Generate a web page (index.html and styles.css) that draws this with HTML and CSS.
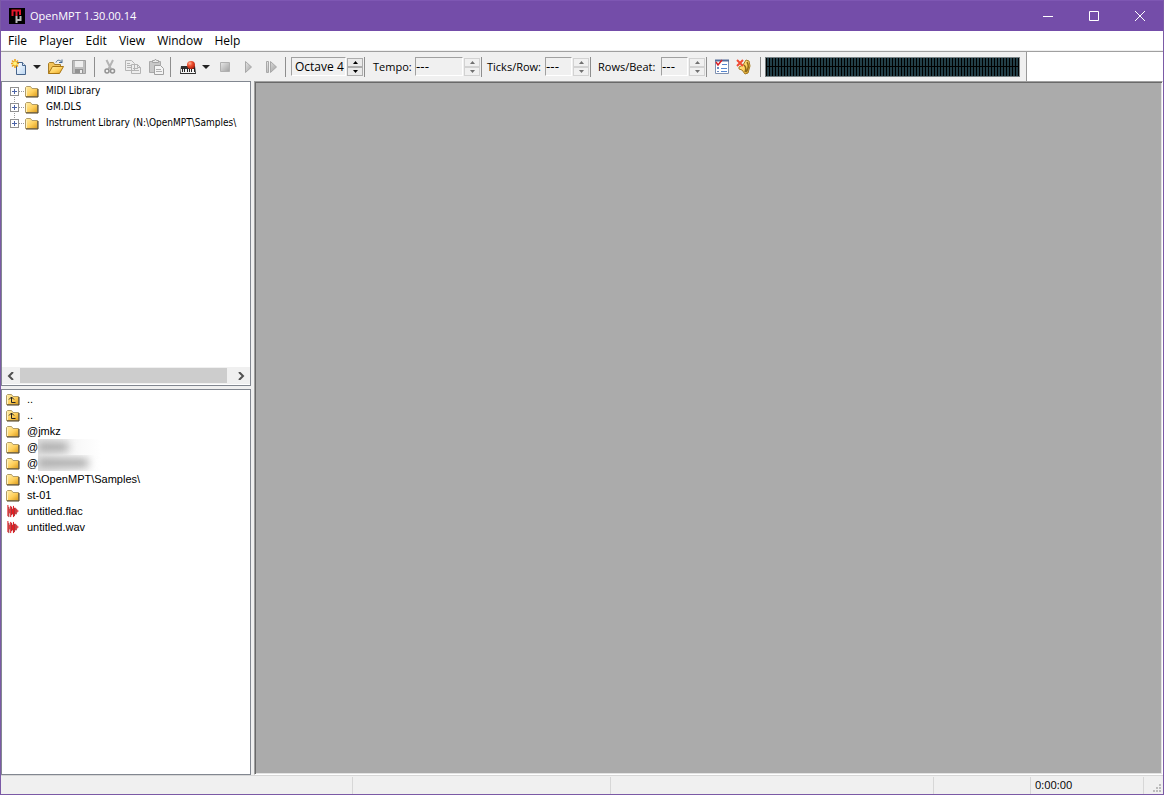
FILE: index.html
```html
<!DOCTYPE html>
<html lang="en">
<head>
<meta charset="utf-8">
<meta name="viewport" content="width=device-width, initial-scale=1">
<title>OpenMPT 1.30.00.14</title>
<link rel="stylesheet" href="styles.css">
</head>
<body>
<svg class="defs" aria-hidden="true">
  <defs>
    <linearGradient id="gold" x1="0" y1="0" x2="1" y2="1"><stop offset="0" stop-color="#fff0ae"/><stop offset=".55" stop-color="#ffd05c"/><stop offset="1" stop-color="#d99a1c"/></linearGradient>
    <linearGradient id="silver" x1="0" y1="0" x2="1" y2="1"><stop offset="0" stop-color="#e8e8e8"/><stop offset="1" stop-color="#a0a0a0"/></linearGradient>
    <linearGradient id="paper" x1="0" y1="0" x2="1" y2="1"><stop offset="0" stop-color="#fff"/><stop offset="1" stop-color="#b9d5f2"/></linearGradient>
    <radialGradient id="ball" cx=".35" cy=".3" r=".8"><stop offset="0" stop-color="#ffb49a"/><stop offset=".4" stop-color="#ee5030"/><stop offset="1" stop-color="#a81808"/></radialGradient>
    <symbol id="folder" viewBox="0 0 14 13"><path d="M.5 11.500v-9l1-1h4l1.500 2h5.500v8z" fill="url(#gold)" stroke="#b19c68"/><path d="M1 12h12V4" fill="none" stroke="#4a3a1a"/><path d="M1.500 11V3.500" fill="none" stroke="#fff2bd"/></symbol>
    <symbol id="wave" viewBox="0 0 14 14"><path d="M1.500 0v12M4.500 1v12M7.500 1v12M9.500 3v7" stroke="#e3060c"/><path d="M2.500 2v11M5.500 2v9M8.500 3v9M10.500 4v6" stroke="#9c1216"/><path d="M3.500 4v5M6.500 4v6M11.500 5v3M12.500 6v1" stroke="#e3060c"/></symbol>
  </defs>
</svg>
<div class="window">
  <header class="titlebar">
    <svg class="logo" viewBox="0 0 16 16"><path fill="#000" d="M0 0h16v16H0z"/><path d="M3.500 8V2.500h7.500V7M7.500 3v5" fill="none" stroke="#e0182c" stroke-width="2"/><path d="M7.500 15V8M7.500 12h4V8" fill="none" stroke="#b9b9bd" stroke-width="2"/></svg>
    <h1 class="title">OpenMPT 1.30.00.14</h1>
    <button class="caption" aria-label="Minimize"><svg viewBox="0 0 12 12"><path d="M1 6.500h10"/></svg></button>
    <button class="caption" aria-label="Maximize"><svg viewBox="0 0 12 12"><path d="M1.500 1.500h9v9h-9z"/></svg></button>
    <button class="caption" aria-label="Close"><svg viewBox="0 0 12 12"><path d="m1 1 10 10M11 1 1 11"/></svg></button>
  </header>
  <nav class="menubar">
    <button>File</button><button>Player</button><button>Edit</button><button>View</button><button>Window</button><button>Help</button>
  </nav>
  <div class="toolbar">
    <div class="group group-file">
      <button class="tool" aria-label="New"><svg viewBox="0 0 16 16"><path d="M5.500 3.500h6l3 3v9h-9z" fill="url(#paper)" stroke="#47658c"/><path d="M11.500 3.500v3h3" fill="#dbe9f8" stroke="#47658c"/><path d="M4 0v9M0 4.500h8M1 1.500l6 6M7 1.500l-6 6" stroke="#eda51d" stroke-width="1.600"/><circle cx="4" cy="4.500" r="2" fill="#fff27c"/></svg></button>
      <button class="drop" aria-label="New options"><svg viewBox="0 0 8 4"><path d="M0 0h8L4 4z"/></svg></button>
      <button class="tool" aria-label="Open"><svg viewBox="0 0 16 16"><path d="M.5 14.500v-10l1-1h4l1 2h6v3" fill="#f3c45b" stroke="#a57c28"/><path d="m.5 14.500 4-7h11l-4 7z" fill="url(#gold)" stroke="#a97513"/><path d="M8 3.500c1-3 4-3 6 0m0-3v3h-3" fill="none" stroke="#476a91"/></svg></button>
      <button class="tool" aria-label="Save" disabled><svg viewBox="0 0 16 16"><path d="M1.500 1.500h13v13h-13z" fill="#bdbdbd" stroke="#a0a0a0"/><path fill="#eee" d="M4 2h8v6H4z"/><path fill="#929292" d="M4 10h8v4H4z"/><path fill="#ededed" d="M9 11h2v3H9z"/></svg></button>
    </div>
    <div class="group group-edit">
      <button class="tool" aria-label="Cut" disabled><svg viewBox="0 0 16 16"><path d="m4.500 1 4.500 9M11 1 6.500 10" fill="none" stroke="#b4b4b4" stroke-width="2"/><circle cx="5" cy="12" r="2" fill="none" stroke="#939393" stroke-width="1.500"/><circle cx="10.500" cy="12" r="2" fill="none" stroke="#939393" stroke-width="1.500"/></svg></button>
      <button class="tool" aria-label="Copy" disabled><svg viewBox="0 0 16 16"><path d="M.5 1.500h6l3 3v7h-9zM6.500 5.500h6l3 3v6h-9z" fill="#eee" stroke="#b4b4b4"/><path d="M2 4.500h3M2 6.500h4M2 8.500h4M8 9.500h5M8 11.500h6M12.500 5.500v3h3" fill="none" stroke="#b4b4b4"/></svg></button>
      <button class="tool" aria-label="Paste" disabled><svg viewBox="0 0 16 16"><path d="M1.500 2.500h11v11h-11z" fill="#c8c8c8" stroke="#a9a9a9"/><path d="M4.500 3.500v-2h2l.5-1h1l.5 1h2v2z" fill="#e9e9e9" stroke="#a3a3a3"/><path d="M6.500 6.500h6l3 3v6h-9z" fill="#f4f4f4" stroke="#a0a0a0"/><path d="M8 10.500h5M8 12.500h6" stroke="#b0b0b0"/></svg></button>
    </div>
    <div class="group group-play">
      <button class="tool" aria-label="Record"><svg viewBox="0 0 16 16"><path d="M1 7h14l1 8H0z" fill="#303030"/><path d="M1 10h14v4H1z" fill="#f4f4f4"/><path d="M2.500 9v4M4.500 9v4M7.500 9v4M9.500 9v4M11.500 9v4M14.500 9v4" stroke="#222"/><circle cx="11" cy="6" r="4" fill="url(#ball)"/></svg></button>
      <button class="drop" aria-label="Record options"><svg viewBox="0 0 8 4"><path d="M0 0h8L4 4z"/></svg></button>
      <button class="tool" aria-label="Stop" disabled><svg viewBox="0 0 16 16"><path d="M3.500 3.500h9v9h-9z" fill="url(#silver)" stroke="#b0b0b0"/></svg></button>
      <button class="tool" aria-label="Play" disabled><svg viewBox="0 0 16 16"><path d="M5.500 2.500v11l6-5.500z" fill="url(#silver)" stroke="#a8a8a8"/></svg></button>
      <button class="tool" aria-label="Play from start" disabled><svg viewBox="0 0 16 16"><path d="M3.500 2.500h2v11h-2zM7.500 2.500v11l6-5.500z" fill="url(#silver)" stroke="#a8a8a8"/></svg></button>
    </div>
    <div class="group group-octave">
      <input class="value octave" aria-label="Octave" value="Octave 4" readonly>
      <span class="spin"><button aria-label="Octave up"><svg viewBox="0 0 5 3"><path d="M0 3h5L2.500 0z"/></svg></button><button aria-label="Octave down"><svg viewBox="0 0 5 3"><path d="M0 0h5L2.500 3z"/></svg></button></span>
    </div>
    <div class="group group-tempo">
      <label for="tempo">Tempo:</label><input class="value wide" id="tempo" value="---" readonly>
      <span class="spin"><button disabled aria-label="Tempo up"><svg viewBox="0 0 5 3"><path d="M0 3h5L2.500 0z"/></svg></button><button disabled aria-label="Tempo down"><svg viewBox="0 0 5 3"><path d="M0 0h5L2.500 3z"/></svg></button></span>
    </div>
    <div class="group group-ticks">
      <label for="ticks">Ticks/Row:</label><input class="value" id="ticks" value="---" readonly>
      <span class="spin"><button disabled aria-label="Ticks up"><svg viewBox="0 0 5 3"><path d="M0 3h5L2.500 0z"/></svg></button><button disabled aria-label="Ticks down"><svg viewBox="0 0 5 3"><path d="M0 0h5L2.500 3z"/></svg></button></span>
    </div>
    <div class="group group-rows">
      <label for="rows">Rows/Beat:</label><input class="value" id="rows" value="---" readonly>
      <span class="spin"><button disabled aria-label="Rows up"><svg viewBox="0 0 5 3"><path d="M0 3h5L2.500 0z"/></svg></button><button disabled aria-label="Rows down"><svg viewBox="0 0 5 3"><path d="M0 0h5L2.500 3z"/></svg></button></span>
    </div>
    <div class="group group-options">
      <button class="tool" aria-label="Options"><svg viewBox="0 0 16 16"><path d="M1.500 1.500h13v13h-13z" fill="#fff" stroke="#7f91b0"/><path d="M1 1.500h14" stroke="#526b99" stroke-width="2"/><path d="M8 5.500h5M7 9.500h6M7 12.500h6" stroke="#5686cf"/><path d="M3 8h2v2H3zM3 12h2v1H3z" fill="#6d8ac0"/><path d="m2 3 2 3 4-5" fill="none" stroke="#d91f25" stroke-width="1.500"/></svg></button>
      <button class="tool" aria-label="Panic"><svg viewBox="0 0 16 16"><path d="M3 8l4-2 3-5 3 1 1 5-2 7-3 1-3-4-3-1z" fill="url(#gold)" stroke="#a37a22"/><path d="M8 6q3 3 1 7M11 3q3 5-1 10" fill="none" stroke="#8c6a1c" stroke-width="1.500"/><path d="m1 1 6 6M7 1 1 7" stroke="#f04a32" stroke-width="2"/></svg></button>
    </div>
    <div class="group group-meter"><div class="meter" role="img" aria-label="Level meter"></div></div>
  </div>
  <main class="workspace">
    <aside class="sidebar">
      <section class="panel library">
        <ul class="rows tree">
          <li><button class="expand" aria-label="Expand MIDI Library"></button><svg class="item-icon"><use href="#folder"/></svg><span>MIDI Library</span></li>
          <li><button class="expand" aria-label="Expand GM.DLS"></button><svg class="item-icon"><use href="#folder"/></svg><span>GM.DLS</span></li>
          <li><button class="expand" aria-label="Expand Instrument Library"></button><svg class="item-icon"><use href="#folder"/></svg><span>Instrument Library (N:\OpenMPT\Samples\</span></li>
        </ul>
        <div class="scrollbar"><button aria-label="Scroll left"><svg viewBox="0 0 8 8"><path d="M6 0 2 4l4 4"/></svg></button><div class="thumb"></div><button aria-label="Scroll right"><svg viewBox="0 0 8 8"><path d="m2 0 4 4-4 4"/></svg></button></div>
      </section>
      <section class="panel files">
        <ul class="rows">
          <li><svg class="item-icon" viewBox="0 0 14 13"><use href="#folder"/><path d="M5.500 4v5.500h4M3 6.500 5.500 4 8 6.500" fill="none" stroke="#222"/></svg><span>..</span></li>
          <li><svg class="item-icon" viewBox="0 0 14 13"><use href="#folder"/><path d="M5.500 4v5.500h4M3 6.500 5.500 4 8 6.500" fill="none" stroke="#222"/></svg><span>..</span></li>
          <li><svg class="item-icon"><use href="#folder"/></svg><span>@jmkz</span></li>
          <li><svg class="item-icon"><use href="#folder"/></svg><span>@</span><i class="hidden-name short"></i></li>
          <li><svg class="item-icon"><use href="#folder"/></svg><span>@</span><i class="hidden-name long"></i></li>
          <li><svg class="item-icon"><use href="#folder"/></svg><span>N:\OpenMPT\Samples\</span></li>
          <li><svg class="item-icon"><use href="#folder"/></svg><span>st-01</span></li>
          <li><svg class="item-icon"><use href="#wave"/></svg><span>untitled.flac</span></li>
          <li><svg class="item-icon"><use href="#wave"/></svg><span>untitled.wav</span></li>
        </ul>
      </section>
    </aside>
    <section class="documents" aria-label="Documents"></section>
  </main>
  <footer class="statusbar">
    <span></span><span></span><span></span><span></span><span>0:00:00</span>
    <svg class="grip" viewBox="0 0 8 8"><path d="M6 0h2v2H6zM3 3h2v2H3zM6 3h2v2H6zM0 6h2v2H0zM3 6h2v2H3zM6 6h2v2H6z"/></svg>
  </footer>
</div>
</body>
</html>
```
FILE: styles.css
```css
* { box-sizing: border-box; }
body { margin: 0; font: 12px/16px "Open Sans", "Noto Sans", sans-serif; color: #000; }
button, input { font: inherit; color: inherit; margin: 0; padding: 0; border: 0; background: none; border-radius: 0; }
button { display: flex; align-items: center; justify-content: center; }
svg { display: block; flex: none; }
.defs { position: absolute; width: 0; height: 0; }
.window { min-height: 100vh; display: flex; flex-direction: column; border: 1px solid #7b5aa6; border-top: 0; background: #f0f0f0; }

.titlebar { height: 31px; display: flex; align-items: stretch; background: #744da9; border-top: 1px solid #7e57b3; color: #fff; padding-left: 8px; }
.logo { width: 16px; height: 16px; align-self: center; }
.title { flex: 1; margin: 0; padding-left: 5px; font-size: 11px; line-height: 29px; font-weight: 400; }
.caption { width: 46px; }
.caption svg { width: 12px; height: 12px; fill: none; stroke: #fff; }

.menubar { height: 21px; display: flex; background: #fff; border-bottom: 1px solid #a0a0a0; box-shadow: inset 0 -1px #f0f0f0; padding-left: 1px; }
.menubar button { padding: 0 6px; height: 19px; }

.toolbar { height: 29px; display: flex; align-items: center; background: #fff; }
.group { height: 29px; flex: none; display: flex; align-items: center; background: linear-gradient(#8e8e8e, #8e8e8e) right center / 1px 20px no-repeat #f0f0f0; }
.group-file { width: 94px; padding-left: 6px; }
.group-edit { width: 76px; padding-left: 3px; }
.group-play { width: 115px; padding-left: 5px; }
.group-octave { width: 79px; padding-left: 5px; }
.group-tempo { width: 117px; padding-left: 8px; }
.group-ticks { width: 109px; padding-left: 5px; }
.group-rows { width: 116px; padding-left: 7px; }
.group-options { width: 54px; padding-left: 4px; }
.group-meter { width: 266px; padding-left: 4px; background: #f0f0f0; border-right: 1px solid #999; }
.tool { width: 23px; height: 23px; }
.group-options .tool { width: 22px; }
.tool svg { width: 16px; height: 16px; }
.drop { width: 14px; height: 23px; }
.drop svg { width: 8px; height: 4px; fill: #222; }
.group label { flex: 1; min-width: 0; font-size: 11px; white-space: nowrap; }
.value { width: 27px; height: 19px; border: 1px solid; border-color: #a0a0a0 #fff #fff #a0a0a0; font-family: "DejaVu Sans", sans-serif; }
.value.wide { width: 48px; }
.value.octave { width: 55px; padding-left: 3px; font-family: inherit; }
.spin { width: 16px; margin: 0 2px 0 1px; display: grid; grid-template-rows: 9px 9px; }
.spin button { border: 1px solid #adadad; background: #eaeaea; }
.spin button:disabled { border-color: #d2d2d2; background: #f0f0f0; }
.spin svg { width: 5px; height: 3px; fill: #000; }
.spin button:disabled svg { fill: #707070; }
.meter { width: 255px; height: 20px; border: 1px solid #778184; background: linear-gradient(#000, #000) center / 100% 1px no-repeat, repeating-linear-gradient(90deg, #000 0 1px, #223e47 1px 3px); }

.workspace { flex: 1; display: grid; grid-template-columns: 250px minmax(0, 1fr); column-gap: 3px; }
.sidebar { display: grid; grid-template-rows: 305px minmax(0, 1fr); row-gap: 3px; }
.panel { border: 1px solid #828790; background: #fff; min-width: 0; overflow: hidden; display: flex; flex-direction: column; }
.rows { flex: 1; margin: 0; padding: 1px 0 0 4px; list-style: none; font: 11px/16px "Liberation Sans", Arial, sans-serif; }
.rows li { height: 16px; display: flex; align-items: center; gap: 7px; white-space: nowrap; }
.item-icon { width: 14px; height: 13px; }
.tree { padding-left: 8px; font-size: 10px; font-family: "DejaVu Sans Condensed", "Liberation Sans", sans-serif; }
.tree li { gap: 0; background: repeating-linear-gradient(#999 0 1px, #fff 1px 2px) 4px 0 / 1px 16px no-repeat, repeating-linear-gradient(90deg, #999 0 1px, #fff 1px 2px) 5px 8px / 10px 1px no-repeat; }
.tree li:first-child { background-position: 4px 8px, 5px 8px; }
.tree li:last-child { background-size: 1px 8px, 10px 1px; }
.tree .item-icon { margin: 0 7px 0 6px; }
.expand { width: 9px; height: 9px; flex: none; border: 1px solid #919191; background: linear-gradient(#4b63a7, #4b63a7) center / 5px 1px no-repeat, linear-gradient(#4b63a7, #4b63a7) center / 1px 5px no-repeat #fff; }
.scrollbar { height: 17px; display: flex; background: #f0f0f0; margin-bottom: 1px; }
.scrollbar button { width: 18px; }
.scrollbar button:last-child { width: 23px; padding-left: 4px; }
.scrollbar svg { width: 8px; height: 8px; fill: none; stroke: #505050; stroke-width: 2; }
.thumb { flex: 1; margin: 1px 0; background: #cdcdcd; }
.hidden-name { width: 63px; height: 16px; margin-left: -7px; overflow: hidden; background: linear-gradient(90deg, #e6e6e6, #fafafa 70%, #fff); }
.hidden-name::before { content: ""; display: block; height: 8px; margin: 4px 0; background: #a0a0a0; filter: blur(4px); }
.short::before { width: 30px; }
.long::before { width: 50px; }
.documents { background: #ababab; border: 1px solid #a0a0a0; border-right-color: #fff; border-bottom-color: #fff; box-shadow: inset 1px 1px #696969, inset -1px -1px #e3e3e3; }

.statusbar { height: 19px; display: grid; grid-template-columns: minmax(0, 1fr) 258px 323px 97px 113px 19px; align-items: center; border-top: 1px solid #d7d7d7; font-size: 11px; }
.statusbar span { height: 17px; padding-left: 4px; border-right: 1px solid #d7d7d7; }
.grip { width: 8px; height: 8px; fill: #bcbcbc; align-self: end; justify-self: end; margin: 0 2px 2px 0; }
```
